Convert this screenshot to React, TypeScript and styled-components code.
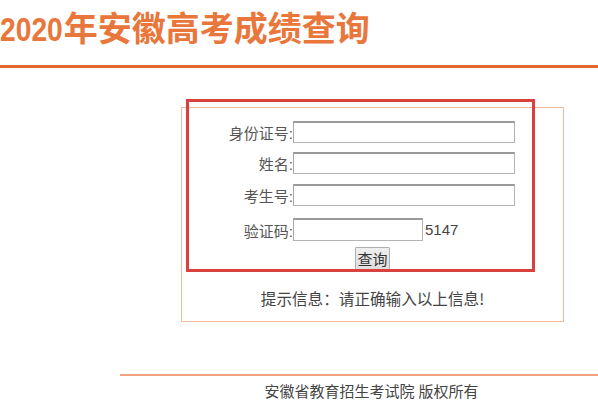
import React from "react";
import styled, { createGlobalStyle } from "styled-components";

const Global = createGlobalStyle`
  html, body { margin: 0; padding: 0; background: #ffffff; }
  body {
    overflow: hidden;
    font-family: "Liberation Sans", "Noto Sans CJK SC", sans-serif;
    color: #444;
  }
`;

const Page = styled.div`
  width: 598px;
  height: 402px;
  overflow: hidden;
  display: flex;
  flex-direction: column;
`;

const Header = styled.header`
  border-bottom: 3px solid #e2692b;
  padding-top: 9px;
  box-sizing: border-box;
  height: 68px;
`;

const Title = styled.h1`
  margin: 0;
  padding-left: 0;
  font-size: 34px;
  line-height: 40px;
  font-weight: bold;
  color: #e9763a;
  white-space: nowrap;
`;

const Year = styled.span`
  display: inline-block;
  transform: scaleX(0.83);
  transform-origin: left center;
  margin-right: -12px;
`;

const Panel = styled.section`
  position: relative;
  margin: 39px 0 0 181px;
  width: 383px;
  height: 215px;
  box-sizing: border-box;
  border: 1px solid #f2b99e;
  padding-top: 13px;
  display: flex;
  flex-direction: column;
  align-items: center;
`;

const Highlight = styled.div`
  position: absolute;
  left: 4px;
  top: -9px;
  width: 349px;
  height: 173px;
  box-sizing: border-box;
  border: 3px solid #d9403e;
  pointer-events: none;
`;

const Form = styled.div`
  align-self: stretch;
  display: grid;
  grid-template-columns: 111px auto;
  justify-content: start;
`;

const Row = styled.div<{ $gap: number }>`
  display: contents;
  & > * {
    margin-top: ${(p) => p.$gap}px;
  }
`;

const Label = styled.label`
  text-align: right;
  font-size: 15px;
  line-height: 17px;
  color: #555;
  align-self: end;
  margin-bottom: 1px;
`;

const Field = styled.div`
  display: flex;
  align-items: center;
`;

const Input = styled.input<{ $w: number; $h?: number }>`
  width: ${(p) => p.$w}px;
  height: ${(p) => p.$h ?? 22}px;
  box-sizing: border-box;
  margin: 0;
  padding: 0 2px;
  border: 1px solid #b4b4b4;
  border-top: 2px solid #9a9a9a;
  border-left-color: #a8a8a8;
  background: #fff;
  font-size: 14px;
  outline: none;
`;

const Code = styled.span`
  margin-left: 2px;
  font-size: 15px;
  color: #444;
`;

const Button = styled.button`
  margin-top: 6px;
  width: 35px;
  height: 23px;
  padding: 0;
  box-sizing: border-box;
  border: 1px solid #b0b0b0;
  border-radius: 1px;
  background: linear-gradient(#efefef, #dedede);
  font-family: "Noto Sans CJK SC", sans-serif;
  font-size: 15px;
  line-height: 20px;
  color: #333;
`;

const Hint = styled.p`
  margin: 18px 0 0;
  font-size: 15.6px;
  line-height: 20px;
  color: #444;
  font-family: "Noto Sans CJK SC", sans-serif;
`;

const Footer = styled.footer`
  margin: 52px 0 0 120px;
  width: 503px;
  border-top: 2px solid #f0a47e;
  padding-top: 6px;
  text-align: center;
  font-size: 15px;
  line-height: 20px;
  color: #444;
`;

const rows = [
  { label: "身份证号:", width: 222, gap: 0, h: 22 },
  { label: "姓名:", width: 222, gap: 9, h: 22 },
  { label: "考生号:", width: 222, gap: 10, h: 22 },
];

export default function App() {
  return (
    <Page>
      <Global />
      <Header>
        <Title>
          <Year>2020</Year>年安徽高考成绩查询
        </Title>
      </Header>
      <Panel>
        <Form>
          {rows.map((r) => (
            <Row key={r.label} $gap={r.gap}>
              <Label>{r.label}</Label>
              <Field>
                <Input $w={r.width} $h={r.h} />
              </Field>
            </Row>
          ))}
          <Row $gap={12}>
            <Label>验证码:</Label>
            <Field>
              <Input $w={130} $h={23} />
              <Code>5147</Code>
            </Field>
          </Row>
        </Form>
        <Button>查询</Button>
        <Hint>提示信息：请正确输入以上信息!</Hint>
        <Highlight />
      </Panel>
      <Footer>安徽省教育招生考试院 版权所有</Footer>
    </Page>
  );
}
